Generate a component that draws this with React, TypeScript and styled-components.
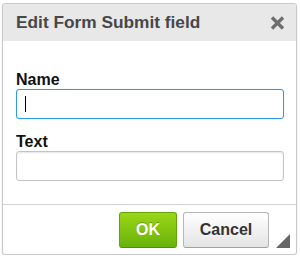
import React from "react";
import styled, { createGlobalStyle } from "styled-components";

const GlobalStyle = createGlobalStyle`
  body {
    margin: 0;
    background: #ffffff;
    font-family: "Liberation Sans", Arial, sans-serif;
  }
`;

const Page = styled.div`
  padding: 3px 3px 0 2px;
`;

const Dialog = styled.div`
  position: relative;
  width: 293px;
  height: 250px;
  display: flex;
  flex-direction: column;
  border: 1px solid #c9c9c9;
  border-radius: 3px;
  box-shadow: 0 1px 2px rgba(0, 0, 0, 0.12);
  overflow: hidden;
  background: #fff;
`;

const Header = styled.div`
  height: 37px;
  padding: 0 11px 0 13px;
  display: flex;
  align-items: center;
  justify-content: space-between;
  background: #e8e8e8;
`;

const Title = styled.span`
  font-size: 17.3px;
  font-weight: bold;
  color: #474747;
`;

const Close = styled.button`
  border: 0;
  padding: 0;
  background: none;
  width: 15px;
  height: 14px;
  display: flex;
  color: #6e6e6e;
  cursor: pointer;
`;

const Body = styled.div`
  flex: 1;
  padding: 30px 12px 0 13px;
  display: flex;
  flex-direction: column;
`;

const Label = styled.label<{ $gap?: number }>`
  display: block;
  font-size: 16px;
  line-height: 18px;
  font-weight: bold;
  color: #111;
  margin-top: ${(p) => p.$gap ?? 0}px;
  margin-bottom: 0;
`;

const Field = styled.div`
  position: relative;
`;

const Input = styled.input<{ $focused?: boolean }>`
  box-sizing: border-box;
  display: block;
  width: 100%;
  height: 30px;
  padding: 0 8px;
  border: 1px solid ${(p) => (p.$focused ? "#2e9bf0" : "#c4c4c4")};
  border-radius: 3px;
  box-shadow: ${(p) =>
    p.$focused ? "0 0 1px rgba(46,155,240,0.4)" : "inset 0 1px 2px rgba(0,0,0,0.1)"};
  font-family: inherit;
  font-size: 14px;
  outline: none;
  background: #fff;
`;

const Caret = styled.span`
  position: absolute;
  left: 9px;
  top: 7px;
  width: 1px;
  height: 16px;
  background: #000;
`;

const Footer = styled.div`
  height: 50px;
  box-sizing: border-box;
  border-top: 1px solid #d3d3d3;
  padding: 7px 27px 0 0;
  display: flex;
  justify-content: flex-end;
  gap: 6px;
`;

const Button = styled.button<{ $primary?: boolean }>`
  box-sizing: border-box;
  height: 36px;
  padding: 0;
  width: ${(p) => (p.$primary ? 58 : 86)}px;
  border-radius: 3px;
  border: 1px solid ${(p) => (p.$primary ? "#62a60a" : "#b6b6b6")};
  border-bottom-color: ${(p) => (p.$primary ? "#4d9200" : "#a0a0a0")};
  background: ${(p) =>
    p.$primary
      ? "linear-gradient(#9ad717, #69b10b)"
      : "linear-gradient(#ffffff, #e4e4e4)"};
  color: ${(p) => (p.$primary ? "#ffffff" : "#333333")};
  text-shadow: ${(p) =>
    p.$primary ? "0 -1px 0 rgba(85,131,12,0.6)" : "0 1px 0 rgba(255,255,255,0.5)"};
  font-family: inherit;
  font-size: 16px;
  font-weight: bold;
  cursor: pointer;
`;

const Grip = styled.svg`
  position: absolute;
  right: 6px;
  bottom: 6px;
`;

export default function App() {
  return (
    <>
      <GlobalStyle />
      <Page>
        <Dialog>
          <Header>
            <Title>Edit Form Submit field</Title>
            <Close aria-label="Close">
              <svg width="15" height="14" viewBox="0 0 15 14">
                <path
                  d="M2 1.5 L13 12.5 M13 1.5 L2 12.5"
                  stroke="currentColor"
                  strokeWidth="3.4"
                />
              </svg>
            </Close>
          </Header>
          <Body>
            <Label>Name</Label>
            <Field>
              <Input $focused />
              <Caret />
            </Field>
            <Label $gap={14}>Text</Label>
            <Input />
          </Body>
          <Footer>
            <Button $primary>OK</Button>
            <Button>Cancel</Button>
          </Footer>
          <Grip width="14" height="14" viewBox="0 0 14 14">
            <polygon points="14,0 14,14 0,14" fill="#666" />
          </Grip>
        </Dialog>
      </Page>
    </>
  );
}
